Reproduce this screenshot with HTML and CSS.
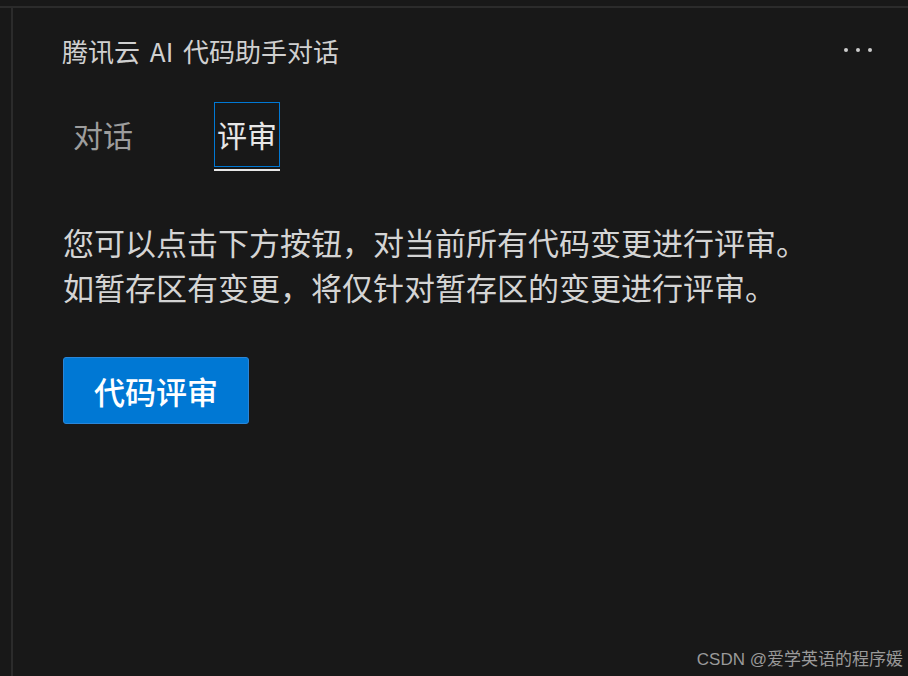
FILE: index.html
```html
<!DOCTYPE html>
<html>
<head>
    <title>腾讯云 AI 代码助手对话</title>
    <link rel="stylesheet" href="styles.css">
</head>
<body>
    <div class="workbench">
        <div class="gutter"></div>
        <div class="panel">
            <div class="panel-header">
                <h1 class="panel-title">腾讯云 AI 代码助手对话</h1>
                <svg class="more" width="28" height="6" viewBox="0 0 28 6">
                    <circle cx="2" cy="3" r="2"></circle>
                    <circle cx="14" cy="3" r="2"></circle>
                    <circle cx="26" cy="3" r="2"></circle>
                </svg>
            </div>

            <div class="tabs">
                <div class="tab">
                    <span class="tab-label">对话</span>
                </div>
                <div class="tab active">
                    <span class="tab-label">评审</span>
                </div>
            </div>

            <p class="intro">
                您可以点击下方按钮，对当前所有代码变更进行评审。<br>
                如暂存区有变更，将仅针对暂存区的变更进行评审。
            </p>

            <button class="review-btn" type="button">代码评审</button>
        </div>
    </div>

    <div class="watermark">CSDN @爱学英语的程序媛</div>
</body>
</html>
```

FILE: styles.css
```css
* {
    box-sizing: border-box;
}

html, body {
    height: 100%;
}

body {
    margin: 0;
    padding-top: 6px;
    background-color: #181818;
    color: #cccccc;
    font-family: "Noto Sans CJK SC", "Noto Sans", sans-serif;
    overflow: hidden;
}

.workbench {
    display: flex;
    height: 100%;
    border-top: 2px solid #2b2b2b;
}

.gutter {
    width: 11px;
    flex-shrink: 0;
}

.panel {
    flex: 1;
    border-left: 2px solid #2b2b2b;
    padding: 25px 36px 0 49px;
}

.panel-header {
    display: flex;
    align-items: center;
    justify-content: space-between;
    height: 36px;
}

.panel-title {
    margin: 0;
    font-size: 26px;
    font-weight: normal;
    line-height: 36px;
    word-spacing: 4px;
    color: #d0d0d0;
}

.more {
    fill: #cccccc;
    margin-top: -2px;
}

.tabs {
    display: flex;
    gap: 78px;
    margin-top: 33px;
    padding-left: 8px;
}

.tab {
    padding-bottom: 2px;
    border-bottom: 2px solid transparent;
}

.tab-label {
    display: block;
    padding: 10px 2px;
    border: 1px solid transparent;
    font-size: 30px;
    line-height: 43px;
    color: #9d9d9d;
}

.tab.active {
    border-bottom-color: #e7e7e7;
}

.tab.active .tab-label {
    border-color: #0078d4;
    color: #e7e7e7;
}

.intro {
    margin: 49px 0 0 1px;
    font-size: 31px;
    line-height: 44.5px;
    color: #d4d4d4;
    white-space: nowrap;
}

.review-btn {
    display: block;
    margin: 48px 0 0 1px;
    padding: 0 30px;
    height: 67px;
    background-color: #0078d4;
    color: #ffffff;
    border: 1px solid #2a86d8;
    border-radius: 3px;
    font-family: "Noto Sans CJK SC", sans-serif;
    font-size: 31px;
    font-weight: 500;
    line-height: 65px;
}

.watermark {
    position: absolute;
    right: 5px;
    bottom: 6px;
    font-family: "Liberation Sans", "Noto Sans CJK SC", sans-serif;
    font-size: 17px;
    line-height: 20px;
    color: #9a9a9a;
}
```
